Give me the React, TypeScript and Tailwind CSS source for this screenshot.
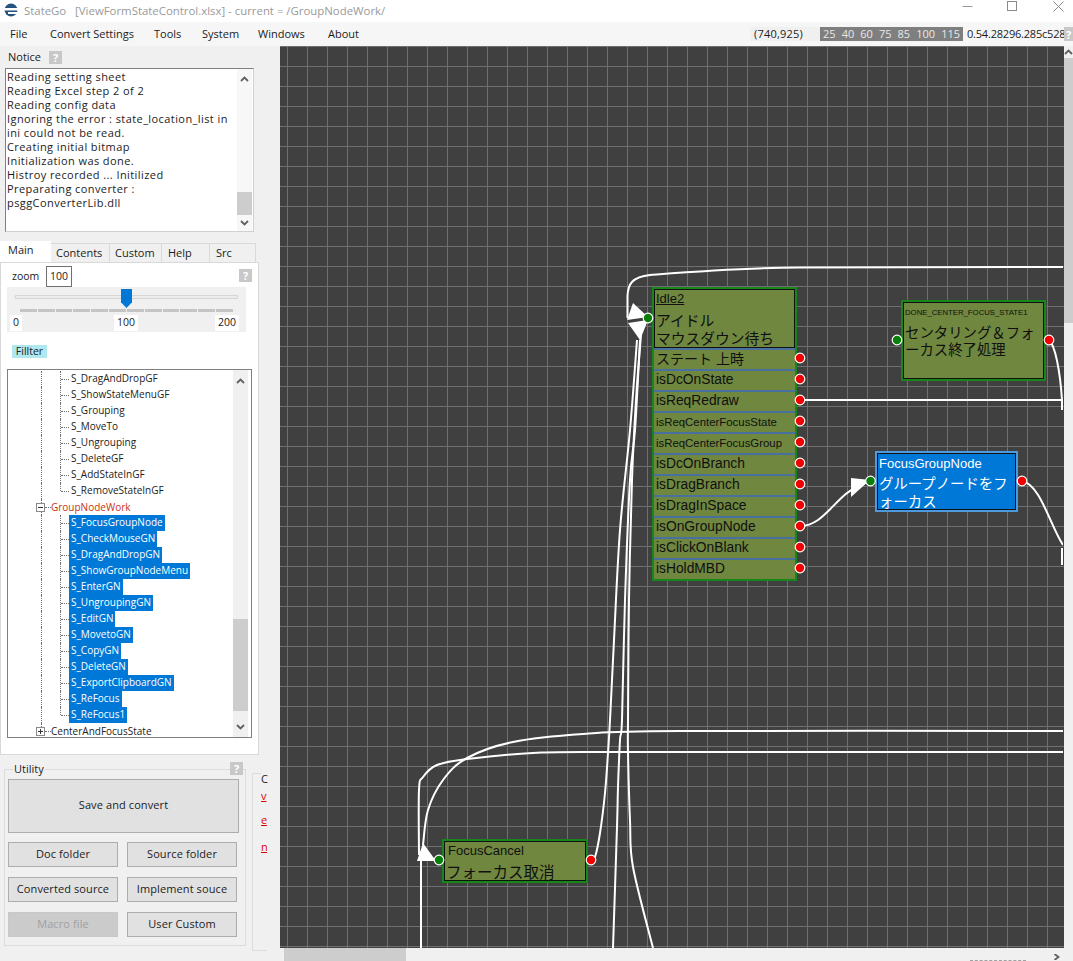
import React from "react";

const notice = [
  "Reading setting sheet",
  "Reading Excel step 2 of 2",
  "Reading config data",
  "Ignoring the error : state_location_list in",
  "ini could not be read.",
  "Creating initial bitmap",
  "Initialization was done.",
  "Histroy recorded ... Initilized",
  "Preparating converter :",
  "psggConverterLib.dll",
];
const plainRows = ["S_DragAndDropGF", "S_ShowStateMenuGF", "S_Grouping", "S_MoveTo", "S_Ungrouping", "S_DeleteGF", "S_AddStateInGF", "S_RemoveStateInGF"];
const selRows = ["S_FocusGroupNode", "S_CheckMouseGN", "S_DragAndDropGN", "S_ShowGroupNodeMenu", "S_EnterGN", "S_UngroupingGN", "S_EditGN", "S_MovetoGN", "S_CopyGN", "S_DeleteGN", "S_ExportClipboardGN", "S_ReFocus", "S_ReFocus1"];
const idleRows: [string, string][] = [
  ["ステート 上時", "text-[14px]"],
  ["isDcOnState", "text-[13.8px]"],
  ["isReqRedraw", "text-[13.8px]"],
  ["isReqCenterFocusState", "text-[11.4px]"],
  ["isReqCenterFocusGroup", "text-[11.4px]"],
  ["isDcOnBranch", "text-[13.8px]"],
  ["isDragBranch", "text-[13.8px]"],
  ["isDragInSpace", "text-[13.8px]"],
  ["isOnGroupNode", "text-[13.8px]"],
  ["isClickOnBlank", "text-[13.8px]"],
  ["isHoldMBD", "text-[13.8px]"],
];
const nodeFont = "font-['Liberation_Sans','Noto_Sans_CJK_JP',sans-serif] font-normal";

function smooth(pts: number[][]) {
  let d = `M${pts[0][0]},${pts[0][1]}`;
  for (let i = 0; i < pts.length - 1; i++) {
    const p0 = pts[Math.max(0, i - 1)];
    const p1 = pts[i];
    const p2 = pts[i + 1];
    const p3 = pts[Math.min(pts.length - 1, i + 2)];
    const c1x = p1[0] + (p2[0] - p0[0]) / 6;
    const c1y = p1[1] + (p2[1] - p0[1]) / 6;
    const c2x = p2[0] - (p3[0] - p1[0]) / 6;
    const c2y = p2[1] - (p3[1] - p1[1]) / 6;
    d += ` C${c1x},${c1y} ${c2x},${c2y} ${p2[0]},${p2[1]}`;
  }
  return d;
}

function Help({ className = "" }: { className?: string }) {
  return <span className={`flex h-[13px] w-[13px] items-center justify-center bg-[#c8c8c8] text-[11px] font-bold leading-none text-white ${className}`}>?</span>;
}
function Chev({ down = false, right = false, className = "" }: { down?: boolean; right?: boolean; className?: string }) {
  return (
    <svg width="9" height="6" viewBox="0 0 9 6" className={className}>
      <polyline points={right ? "2.5,0 6.5,3 2.5,6" : down ? "1,1 4.5,4.5 8,1" : "1,5 4.5,1.5 8,5"} fill="none" stroke="#606060" strokeWidth="1.8" />
    </svg>
  );
}
function Guide({ x, half = false }: { x: string; half?: boolean }) {
  return <span className={`absolute top-0 border-l border-dotted border-[#707070] ${x} ${half ? "h-2" : "h-4"}`} />;
}
function Leaf({ text, selected = false, last = false }: { text: string; selected?: boolean; last?: boolean }) {
  return (
    <div className="relative flex h-4 items-center pl-[53px]">
      <Guide x="left-[33px]" />
      <Guide x="left-[52px]" half={last} />
      <span className="w-[8px] border-t border-dotted border-[#707070]" />
      <span className={`h-4 px-[2px] leading-[15px] whitespace-nowrap ${selected ? "bg-[#0078d7] text-white" : "text-[#222]"}`}>{text}</span>
    </div>
  );
}
function Toggle({ text, plus = false, red = false }: { text: string; plus?: boolean; red?: boolean }) {
  return (
    <div className="relative flex h-4 items-center pl-[28px]">
      <Guide x="left-[33px]" half={plus} />
      <span className="relative flex h-[9px] w-[9px] items-center justify-center border border-[#8a8a8a] bg-white">
        <span className="h-px w-[5px] bg-[#333]" />
        {plus && <span className="absolute h-[5px] w-px bg-[#333]" />}
      </span>
      <span className="w-[6px] border-t border-dotted border-[#707070]" />
      <span className={`leading-[15px] whitespace-nowrap ${red ? "text-[#c8320f]" : "text-[#222]"}`}>{text}</span>
    </div>
  );
}
function Btn({ children, off = false, className = "h-[25px] w-[110px]" }: { children: React.ReactNode; off?: boolean; className?: string }) {
  return (
    <div className={`flex items-center justify-center border pb-px text-[11px] tracking-[0.1px] ${off ? "border-[#c8c8c8] bg-[#cbcbcb] text-[#a0a0a0]" : "border-[#adadad] bg-[#e1e1e1] text-[#1c1c1c]"} ${className}`}>
      {children}
    </div>
  );
}
function GreenNode({ className, title, titleClass, lines, blue = false, bodyClass = "" }: { className: string; title: string; titleClass: string; lines: string[]; blue?: boolean; bodyClass?: string }) {
  return (
    <div className={`absolute border-2 ${blue ? "border-[#4c9be0]" : "border-[#17871c]"} ${className} ${nodeFont}`}>
      <div className={`flex h-full flex-col overflow-hidden border border-[#111] pl-px ${blue ? "bg-[#0078d7] text-white" : "bg-[#6f873f] text-[#101010]"}`}>
        <div className={`whitespace-nowrap ${titleClass}`}>{title}</div>
        <div className={`whitespace-nowrap ${bodyClass}`}>
          {lines.map((l) => <div key={l}>{l}</div>)}
        </div>
      </div>
    </div>
  );
}
function Dot({ x, y, green = false }: { x: number; y: number; green?: boolean }) {
  return <circle cx={x} cy={y} r="4.8" fill={green ? "#0a800a" : "#f00000"} stroke="#ffffff" strokeWidth="1.2" />;
}

function Wires() {
  const reds = [358, 379, 400, 421, 442, 463, 484, 505, 526, 547, 568];
  const curves = [
    [[1063, 731], [680, 731], [583, 734], [513, 742], [467, 758], [443, 780], [428, 810], [423, 845]],
    [[1063, 752], [627, 752], [533, 753], [467, 759], [437, 765], [423, 777], [419, 790], [419, 855]],
    [[591, 860], [595, 857], [600, 833], [605, 793], [608, 753], [610, 720], [614, 640], [620, 530], [630, 430], [637, 340]],
    [[613, 948], [617, 827], [618, 787], [620, 740], [622, 720], [625, 600], [630, 480], [635, 430], [640, 340]],
    [[653, 948], [633, 867], [630, 820], [628, 753], [628, 720], [629, 600], [632, 480], [636, 400], [641, 335]],
  ];
  return (
    <svg className="absolute top-0 left-0 h-[902px] w-[783px]" viewBox="280 46 783 902">
      <g fill="none" stroke="#ffffff" strokeWidth="2" strokeLinejoin="round">
        <path d="M1063,267 L800,267.5 C740,268 690,272 650,275 C632,277 628,284 627.5,296 L627.5,318" />
        <path d="M800,400 L1063,400" />
        <path d="M1049,340 C1055,345 1060,370 1062,400 L1062,410" />
        <path d="M800,526 C825,526 835,495 862,484" />
        <path d="M1022,481 C1040,484 1050,525 1063,545" />
        {curves.map((c, i) => <path key={i} d={smooth(c)} />)}
        <path d="M421,948 L421,855" />
      </g>
      <g fill="#ffffff">
        <polygon points="633,303 648,317 627,320" />
        <polygon points="648,320 628,323 640,340" />
        <polygon points="870,480 851,478 851,497" />
        <polygon points="423,843 417,861 436,861" />
        <rect x="1061" y="548" width="2" height="17" />
      </g>
      <Dot x={648} y={318} green />
      {reds.map((y) => <Dot key={y} x={800} y={y} />)}
      <Dot x={897} y={340} green />
      <Dot x={1049} y={340} />
      <Dot x={870.5} y={481} green />
      <Dot x={1022} y={481} />
      <Dot x={439} y={860} green />
      <Dot x={591} y={860} />
    </svg>
  );
}

export default function App() {
  return (
    <div className="flex h-[961px] w-[1073px] flex-col overflow-hidden bg-[#f0f0f0] font-['Open_Sans',sans-serif] text-[11px] text-[#1c1c1c]">
      {/* title bar */}
      <div className="flex h-[22px] items-center bg-white pl-[3px] text-[11.4px] text-[#9a9a9a]">
        <svg width="16" height="16" viewBox="0 0 16 16">
          <circle cx="8" cy="7" r="6.5" fill="#25527f" />
          <rect x="0" y="5" width="16" height="2.5" fill="#ffffff" />
          <rect x="5" y="9" width="11" height="2" fill="#ffffff" />
        </svg>
        <span className="ml-[5px] whitespace-pre">StateGo   [ViewFormStateControl.xlsx] - current = /GroupNodeWork/</span>
        <svg className="ml-auto" width="111" height="22" viewBox="962 0 111 22">
          <path d="M962.5,6.5 H972.5" stroke="#9a9a9a" fill="none" />
          <rect x="1007.5" y="1.5" width="9" height="9" stroke="#8a8a8a" fill="none" />
          <path d="M1053.5,1.5 L1063.5,11.5 M1063.5,1.5 L1053.5,11.5" stroke="#8a8a8a" fill="none" />
        </svg>
      </div>
      {/* menu bar */}
      <div className="flex h-[24px] items-center bg-[#f6f6f6] pl-[10px]">
        <span className="w-[40px]">File</span>
        <span className="w-[104px]">Convert Settings</span>
        <span className="w-[48px]">Tools</span>
        <span className="w-[56px]">System</span>
        <span className="w-[70px]">Windows</span>
        <span className="w-[422px]">About</span>
        <span className="flex h-[14px] w-[70px] items-center bg-[#f0f0f0] pl-[4px] tracking-[0.2px]">(740,925)</span>
        <span className="flex h-[14px] w-[143px] items-center justify-between bg-[#7f7f7f] px-[3px] text-[#e8e8e8]">
          <span>25</span><span>40</span><span>60</span><span>75</span><span>85</span><span>100</span><span>115</span>
        </span>
        <span className="ml-[4px] w-[97px] overflow-hidden tracking-[-0.2px] whitespace-nowrap">0.54.28296.285c528</span>
        <span className="flex h-[14px] w-[9px] items-center justify-center bg-[#c8c8c8] text-[11px] leading-none font-bold text-white">?</span>
      </div>

      <div className="flex min-h-0 flex-1">
        {/* sidebar */}
        <div className="flex w-[280px] shrink-0 flex-col">
          <div className="flex h-[22px] items-center gap-[8px] pl-[8px]">
            <span>Notice</span>
            <Help />
          </div>
          <div className="ml-[5px] flex h-[164px] w-[249px] border border-[#d0d0d0] border-t-[#808080] border-l-[#808080] bg-white">
            <div className="flex-1 pt-[1px] pl-[1px] leading-[14px] tracking-[0.42px] whitespace-nowrap">
              {notice.map((n) => <div key={n}>{n}</div>)}
            </div>
            <div className="flex w-[15px] flex-col items-center bg-[#f7f7f7] pt-[7px]">
              <Chev />
              <div className="mt-[110px] h-[23px] w-[15px] bg-[#cdcdcd]" />
              <Chev down className="mt-[5px]" />
            </div>
            <div className="w-px" />
          </div>
          {/* tabs */}
          <div className="mt-[9px] flex h-[21px] w-[256px] items-end">
            <span className="flex h-[21px] w-[51px] items-center bg-white pb-[2px] pl-[8px]">Main</span>
            <span className="flex h-[19px] w-[59px] items-center border-t border-r border-[#d9d9d9] pl-[5px]">Contents</span>
            <span className="flex h-[19px] w-[52px] items-center border-t border-r border-[#d9d9d9] pl-[5px]">Custom</span>
            <span className="flex h-[19px] w-[48px] items-center border-t border-r border-[#d9d9d9] pl-[6px]">Help</span>
            <span className="flex h-[19px] w-[46px] items-center border-t border-r border-[#d9d9d9] pl-[6px]">Src</span>
          </div>
          {/* panel */}
          <div className="h-[493px] w-[259px] border border-[#d9d9d9] bg-white">
            <div className="mt-[3px] flex h-[21px] items-center pl-[11px]">
              <span className="w-[34px] text-[10.5px]">zoom</span>
              <span className="flex h-[21px] w-[26px] items-center justify-center border border-[#707070] text-[10.5px]">100</span>
              <Help className="mt-[-3px] ml-[167px]" />
            </div>
            {/* slider */}
            <div className="relative ml-[6px] h-[45px] w-[239px] bg-[#f0f0f0] pt-[8px] pl-[8px]">
              <div className="h-[4px] w-[223px] border border-[#d6d6d6] bg-[#ececec]" />
              <div className="absolute top-[2px] left-[114px] h-[19px] w-[11px] bg-[#0078d7] [clip-path:polygon(0_0,100%_0,100%_70%,50%_100%,0_70%)]" />
              <div className="mt-[10px] ml-[5px] flex h-[3px] w-[213px] gap-px">
                {Array.from({ length: 12 }, (_, i) => <span key={i} className="flex-1 bg-[#c4c4c4]" />)}
              </div>
              <div className="mt-[5px] ml-[-5px] flex h-[12px] w-[229px] items-center justify-between text-[10.5px]">
                <span className="bg-white px-[3px]">0</span>
                <span className="ml-[15px] bg-white px-[3px]">100</span>
                <span className="bg-white px-[3px]">200</span>
              </div>
            </div>
            <div className="mt-[13px] ml-[11px] flex h-[13px] w-[35px] items-center justify-center bg-[#b0e8f0] text-[10.5px]">Fillter</div>
            {/* tree */}
            <div className="mt-[11px] ml-[6px] flex h-[369px] w-[245px] overflow-hidden border border-[#808080] bg-white pt-px text-[10px]">
              <div className="w-[225px] shrink-0">
                {plainRows.map((r, i) => <Leaf key={r} text={r} last={i === plainRows.length - 1} />)}
                <Toggle text="GroupNodeWork" red />
                {selRows.map((r, i) => <Leaf key={r} text={r} selected last={i === selRows.length - 1} />)}
                <Toggle text="CenterAndFocusState" plus />
              </div>
              <div className="-mt-px flex h-[367px] w-[15px] flex-col items-center bg-[#f0f0f0] pt-[8px]">
                <Chev />
                <div className="mt-[235px] h-[92px] w-[15px] bg-[#cdcdcd]" />
                <Chev down className="mt-[13px]" />
              </div>
            </div>
          </div>
          {/* bottom groups */}
          <div className="flex">
            <div className="relative mt-[14px] ml-[4px] h-[177px] w-[242px] border border-[#dcdcdc] pt-[9px] pl-[3px]">
              <span className="absolute top-[-9px] left-[8px] bg-[#f0f0f0] px-px">Utility</span>
              <Help className="absolute top-[-8px] right-[2px]" />
              <Btn className="h-[54px] w-[231px]">Save and convert</Btn>
              <div className="mt-[9px] grid w-[229px] grid-cols-[110px_110px] gap-x-[9px] gap-y-[10px]">
                <Btn>Doc folder</Btn>
                <Btn>Source folder</Btn>
                <Btn>Converted source</Btn>
                <Btn>Implement souce</Btn>
                <Btn off>Macro file</Btn>
                <Btn>User Custom</Btn>
              </div>
            </div>
            <div className="mt-[18px] ml-[6px] h-[178px] w-[15px] border-y border-l border-[#dcdcdc] pl-[8px]">
              <div className="-mt-px h-[16px] w-[7px] bg-[#f0f0f0] leading-[11px]">C</div>
              <div className="mt-[-2px] h-[24px] w-[6px] overflow-hidden leading-[18px] text-[#e00000] underline">v</div>
              <div className="h-[27px] w-[6px] overflow-hidden leading-[18px] text-[#e00000] underline">e</div>
              <div className="h-[18px] w-[6px] overflow-hidden leading-[18px] text-[#e00000] underline">n</div>
            </div>
          </div>
        </div>

        {/* canvas column */}
        <div className="flex min-w-0 flex-1 flex-col">
          <div className="flex min-h-0 flex-1">
            <div className="relative flex-1 overflow-hidden bg-[#404040] bg-[linear-gradient(#6f6f6f_1px,transparent_1px),linear-gradient(90deg,#6f6f6f_1px,transparent_1px)] bg-[length:20px_20px] bg-[position:7px_0px]">
              {/* Idle2 */}
              <div className={`absolute top-[241px] left-[372px] h-[294px] w-[145px] border-2 border-[#17871c] bg-[#6f873f] text-[#101010] ${nodeFont}`}>
                <div className="h-[59px] border border-[#111] pl-[1px]">
                  <div className="pt-[1px] text-[13px] leading-[16px] underline">Idle2</div>
                  <div className="mt-[5px] text-[14.75px] leading-[18px] whitespace-nowrap">
                    <div>アイドル</div>
                    <div>マウスダウン待ち</div>
                  </div>
                </div>
                {idleRows.map(([t, size]) => (
                  <div key={t} className={`flex h-[21px] items-center overflow-hidden border-t-2 border-[#4a70a0] pl-[2px] whitespace-nowrap ${size}`}>{t}</div>
                ))}
              </div>
              <GreenNode
                className="top-[254px] left-[621px] h-[81px] w-[145px]"
                title="DONE_CENTER_FOCUS_STATE1"
                titleClass="mt-[3px] text-[7.75px] leading-[14px]"
                lines={["センタリング＆フォ", "ーカス終了処理"]}
                bodyClass="mt-[5px] text-[14.4px] leading-[17px]"
              />
              <GreenNode
                blue
                className="top-[405px] left-[595px] h-[61px] w-[143px]"
                title="FocusGroupNode"
                titleClass="text-[13px] leading-[18px] mt-[1px]"
                lines={["グループノードをフ", "ォーカス"]}
                bodyClass="mt-[2px] text-[14.4px] leading-[18px]"
              />
              <GreenNode
                className="top-[793px] left-[162px] h-[44px] w-[146px]"
                title="FocusCancel"
                titleClass="text-[13px] leading-[16px] mt-[1px] pl-[2px]"
                lines={["フォーカス取消"]}
                bodyClass="mt-[5px] text-[15.5px] leading-[18px]"
              />
              <Wires />
            </div>
            <div className="flex w-[9px] shrink-0 flex-col bg-[#f0f0f0]">
              <div className="flex h-[12px] justify-center overflow-hidden pt-[3px]"><Chev /></div>
              <div className="h-[265px] bg-[#cdcdcd]" />
            </div>
          </div>
          <div className="flex h-[13px] shrink-0 items-start bg-[#f0f0f0]">
            <div className="ml-[4px] h-[13px] w-[122px] bg-[#cdcdcd]" />
            <div className="mt-[12px] ml-[564px] w-[56px] border-t border-dashed border-[#a0a0a0]" />
            <Chev right className="mt-[6px] ml-[26px]" />
          </div>
        </div>
      </div>
    </div>
  );
}
